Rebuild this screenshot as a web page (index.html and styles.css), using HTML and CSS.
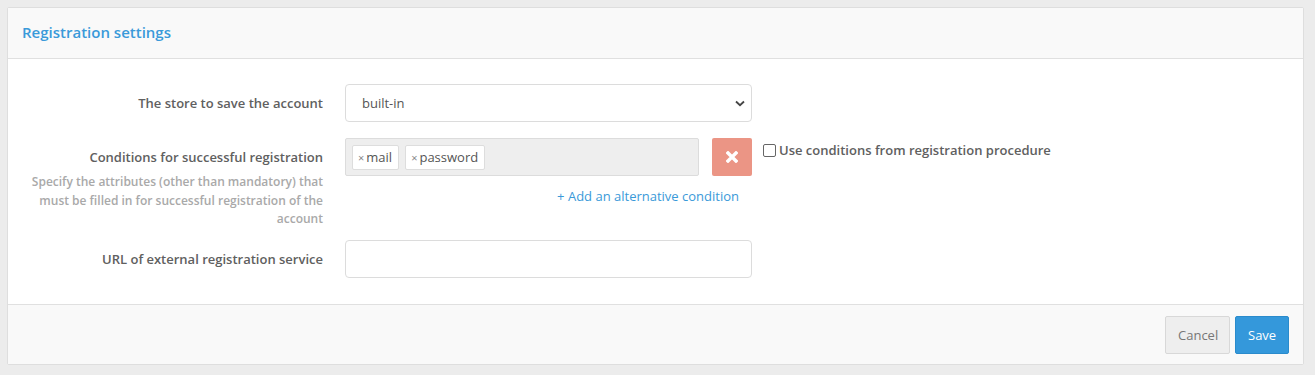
FILE: index.html
```html
<!DOCTYPE html>
<html>
<head>
<meta charset="utf-8">
<link rel="stylesheet" href="styles.css">
</head>
<body>
<div class="panel">
  <div class="panel-heading">Registration settings</div>
  <div class="panel-body">
    <div class="form-row">
      <div class="label"><div class="label-title">The store to save the account</div></div>
      <div class="control">
        <div class="select">
          <span>built-in</span>
          <svg class="chev" width="10" height="7" viewBox="0 0 10 7"><path d="M1 1.5 L5 5.2 L9 1.5" fill="none" stroke="#444" stroke-width="1.8"/></svg>
        </div>
      </div>
    </div>
    <div class="form-row row-cond">
      <div class="label">
        <div class="label-title">Conditions for successful registration</div>
        <div class="help">Specify the attributes (other than mandatory) that must be filled in for successful registration of the account</div>
      </div>
      <div class="control">
        <div class="cond-line">
          <div class="tags">
            <span class="tag"><span class="x">×</span>mail</span>
            <span class="tag"><span class="x">×</span>password</span>
          </div>
          <button class="remove"><svg width="12" height="12" viewBox="0 0 12 12"><path d="M2 2 L10 10 M10 2 L2 10" stroke="#fff" stroke-width="3.4" stroke-linecap="square"/></svg></button>
        </div>
        <div class="add-link">+ Add an alternative condition</div>
      </div>
      <label class="check"><span class="box"></span>Use conditions from registration procedure</label>
    </div>
    <div class="form-row">
      <div class="label"><div class="label-title">URL of external registration service</div></div>
      <div class="control"><div class="input"></div></div>
    </div>
  </div>
  <div class="panel-footer">
    <button class="btn btn-default">Cancel</button>
    <button class="btn btn-primary">Save</button>
  </div>
</div>
</body>
</html>
```

FILE: styles.css
```css
html, body {
  margin: 0;
  padding: 0;
  background: #ececec;
}
body {
  padding: 7px 11px 12px 7px;
  font-family: "Open Sans", "Liberation Sans", sans-serif;
  font-size: 13px;
  color: #555;
}
.panel {
  background: #fff;
  border: 1px solid #dedede;
  border-radius: 2px;
}
.panel-heading {
  background: #f9f9f9;
  border-bottom: 1px solid #e0e0e0;
  height: 51px;
  box-sizing: border-box;
  padding: 14px 14px 0;
  font-size: 15px;
  font-weight: 600;
  color: #3a9ad9;
  line-height: 21px;
}
.panel-body {
  padding: 25px 0 26px 0;
}
.form-row {
  display: grid;
  grid-template-columns: 315px 407px auto;
  column-gap: 22px;
  align-items: center;
  margin-bottom: 16px;
}
.form-row:last-child { margin-bottom: 0; }
.row-cond {
  align-items: start;
  margin-bottom: 11px;
}
.label {
  text-align: right;
  font-weight: 600;
  color: #606060;
  line-height: 18px;
}
.row-cond .label { padding-top: 10px; }
.help {
  margin-top: 7px;
  font-size: 12px;
  color: #a9a9a9;
  line-height: 18.5px;
  padding-left: 0;
}
.select, .input {
  height: 38px;
  box-sizing: border-box;
  border: 1px solid #dcdcdc;
  border-radius: 4px;
  background: #fff;
}
.select {
  display: flex;
  align-items: center;
  justify-content: space-between;
  padding: 0 6px 0 16px;
  color: #555;
}
.cond-line {
  display: flex;
  gap: 13px;
}
.tags {
  flex: 0 0 354px;
  height: 38px;
  box-sizing: border-box;
  background: #eee;
  border: 1px solid #dcdcdc;
  border-radius: 2px;
  display: flex;
  align-items: center;
  gap: 6px;
  padding: 0 6px;
}
.tag {
  height: 25px;
  box-sizing: border-box;
  background: #fff;
  border: 1px solid #ddd;
  border-radius: 2px;
  display: inline-flex;
  align-items: center;
  padding: 0 6px 0 5px;
  color: #555;
}
.tag .x {
  font-size: 11px;
  color: #888;
  margin-right: 2px;
}
.remove {
  width: 40px;
  height: 38px;
  border: none;
  border-radius: 2px;
  background: #eb9585;
  display: flex;
  align-items: center;
  justify-content: center;
  padding: 0;
}
.add-link {
  margin-top: 11px;
  text-align: right;
  padding-right: 13px;
  color: #3a9ad9;
  line-height: 18px;
}
.check {
  display: flex;
  align-items: center;
  gap: 3px;
  margin-left: -11px;
  padding-top: 3px;
  font-weight: 600;
  color: #606060;
  line-height: 18px;
}
.box {
  width: 11px;
  height: 11px;
  border: 1px solid #666;
  border-radius: 2px;
  background: #fff;
  display: inline-block;
}
.panel-footer {
  background: #f9f9f9;
  border-top: 1px solid #e0e0e0;
  display: flex;
  justify-content: flex-end;
  gap: 5px;
  padding: 11px 14px 10px;
}
.btn {
  height: 38px;
  box-sizing: border-box;
  border-radius: 2px;
  font-family: "Open Sans", "Liberation Sans", sans-serif;
  font-size: 13px;
  padding: 0 12px;
  cursor: pointer;
}
.btn-default {
  width: 65px;
  background: #eee;
  border: 1px solid #d8d8d8;
  color: #777;
}
.btn-primary {
  width: 54px;
  background: #3498db;
  border: 1px solid #2a8bcc;
  color: #fff;
}
```
